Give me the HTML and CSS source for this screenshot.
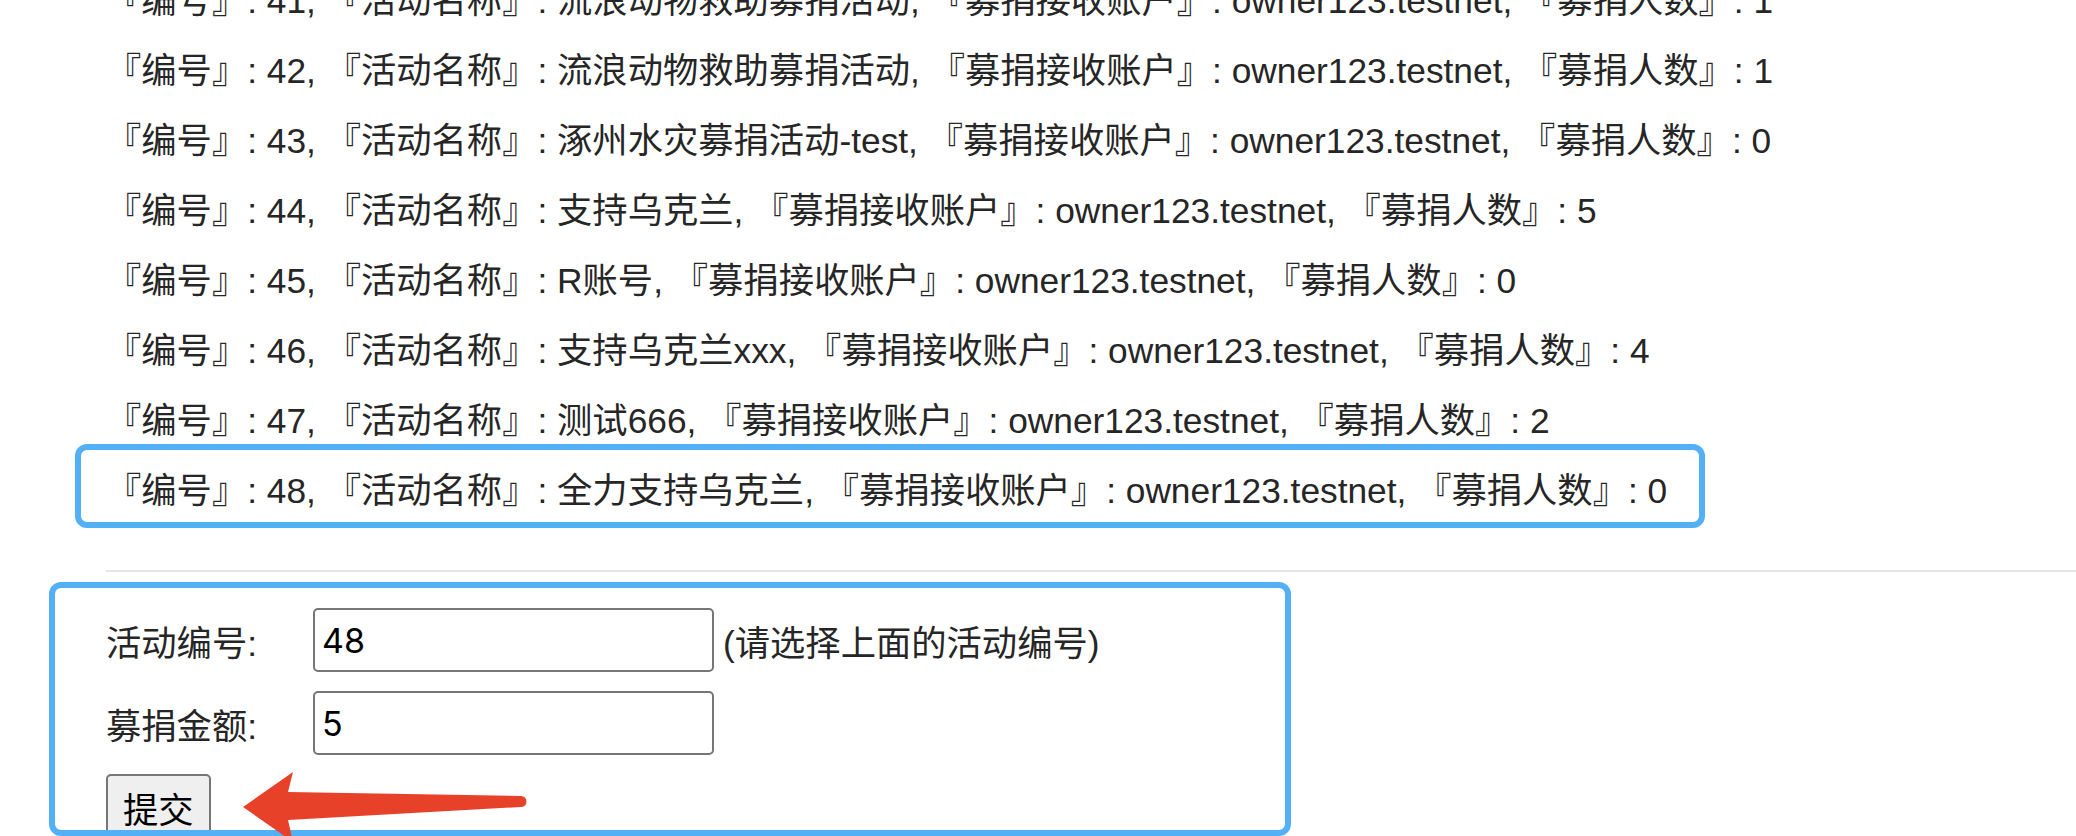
FILE: index.html
```html
<!DOCTYPE html>
<html lang="zh-CN">
<head>
<meta charset="utf-8">
<title>募捐活动</title>
<link rel="stylesheet" href="styles.css">
</head>
<body>
<div class="page">
  <div class="list">
    <div class="row">『编号』: 41, 『活动名称』: 流浪动物救助募捐活动, 『募捐接收账户』: owner123.testnet, 『募捐人数』: 1</div>
    <div class="row">『编号』: 42, 『活动名称』: 流浪动物救助募捐活动, 『募捐接收账户』: owner123.testnet, 『募捐人数』: 1</div>
    <div class="row">『编号』: 43, 『活动名称』: 涿州水灾募捐活动-test, 『募捐接收账户』: owner123.testnet, 『募捐人数』: 0</div>
    <div class="row">『编号』: 44, 『活动名称』: 支持乌克兰, 『募捐接收账户』: owner123.testnet, 『募捐人数』: 5</div>
    <div class="row">『编号』: 45, 『活动名称』: R账号, 『募捐接收账户』: owner123.testnet, 『募捐人数』: 0</div>
    <div class="row">『编号』: 46, 『活动名称』: 支持乌克兰xxx, 『募捐接收账户』: owner123.testnet, 『募捐人数』: 4</div>
    <div class="row">『编号』: 47, 『活动名称』: 测试666, 『募捐接收账户』: owner123.testnet, 『募捐人数』: 2</div>
    <div class="row">『编号』: 48, 『活动名称』: 全力支持乌克兰, 『募捐接收账户』: owner123.testnet, 『募捐人数』: 0</div>
  </div>
  <div class="divider"></div>
  <form class="form">
    <div class="field">
      <label class="label" for="aid">活动编号:</label>
      <input class="input" id="aid" type="text" value="48">
      <span class="hint">(请选择上面的活动编号)</span>
    </div>
    <div class="field">
      <label class="label" for="amt">募捐金额:</label>
      <input class="input" id="amt" type="text" value="5">
    </div>
    <div class="field">
      <button class="submit" type="button">提交</button>
    </div>
  </form>
</div>
<svg class="annotations" width="2076" height="836" viewBox="0 0 2076 836" xmlns="http://www.w3.org/2000/svg">
  <rect x="78" y="447" width="1624" height="78" rx="9" ry="9" fill="none" stroke="#53aff6" stroke-width="6"/>
  <rect x="52" y="585" width="1236" height="248" rx="9" ry="9" fill="none" stroke="#53aff6" stroke-width="6"/>
  <path d="M243 807 L293 772 L288 792 L521 796 A5.5 5.5 0 0 1 521 807 L288 820 L293 842 Z" fill="#e8412a"/>
</svg>
</body>
</html>
```
FILE: styles.css
```css
html, body {
  margin: 0;
  padding: 0;
  overflow: hidden;
  background: #ffffff;
}

body {
  position: relative;
  width: 2076px;
  height: 836px;
  font-family: "Liberation Sans", "Noto Sans CJK SC", sans-serif;
  color: #262626;
}

.page {
  padding-left: 106px;
}

.list {
  margin-top: -34px;
}

.row {
  height: 70px;
  line-height: 70px;
  font-size: 35.3px;
  white-space: nowrap;
}

.divider {
  margin-top: 44px;
  border-top: 2px solid #e6e6e6;
}

.form {
  margin-top: 36px;
  display: flex;
  flex-direction: column;
  gap: 19px;
}

.field {
  display: flex;
  align-items: center;
  font-size: 35.3px;
}

.label {
  width: 207px;
  flex: none;
  color: #262626;
}

.input {
  box-sizing: border-box;
  width: 401px;
  height: 64px;
  border: 2px solid #767676;
  border-radius: 5px;
  padding: 0 7px;
  font-family: "Inter", "Liberation Sans", sans-serif;
  font-size: 34px;
  color: #000;
  background: #fff;
  outline: none;
}

.hint {
  margin-left: 9px;
  color: #262626;
}

.submit {
  box-sizing: border-box;
  height: 66px;
  padding: 0 15px;
  border: 2px solid #767676;
  border-radius: 5px;
  background: #efefef;
  font-family: "Liberation Sans", "Noto Sans CJK SC", sans-serif;
  font-size: 35.3px;
  color: #000;
}

.annotations {
  position: absolute;
  top: 0;
  left: 0;
  pointer-events: none;
}
```
